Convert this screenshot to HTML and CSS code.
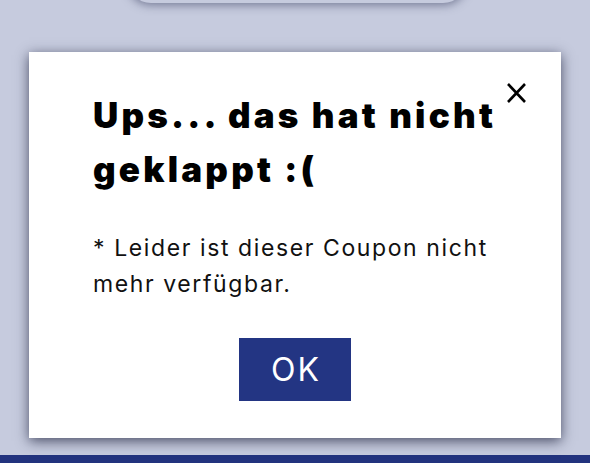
FILE: index.html
```html
<!DOCTYPE html>
<html>
  <head>
    <title>Coupon</title>
    <link rel="stylesheet" href="styles.css">
  </head>
  <body>
    <div class="topcard"></div>

    <section class="dialog">
      <button class="close" aria-label="Schließen">
        <svg width="21" height="20" viewBox="0 0 21 20">
          <path d="M2 1 L19 19 M19 1 L2 19" stroke="#000" stroke-width="2.6" fill="none"/>
        </svg>
      </button>
      <h1>Ups... das hat nicht geklappt :(</h1>
      <p class="message">* Leider ist dieser Coupon nicht mehr verfügbar.</p>
      <div class="actions">
        <button class="ok">OK</button>
      </div>
    </section>

    <div class="navbar"></div>
  </body>
</html>
```

FILE: styles.css
```css
html, body{
  height: 100%;
}
body{
  margin: 0;
  background: #c6cbde;
  font-family: Inter, "Noto Sans", sans-serif;
  display: flex;
  flex-direction: column;
  align-items: center;
  overflow: hidden;
}
.topcard{
  width: 340px;
  height: 30px;
  margin-top: -27px;
  margin-left: 4px;
  flex-shrink: 0;
  background: #c6cbde;
  border-radius: 0 0 24px 24px;
  box-shadow: 0 2px 10px rgba(50, 55, 90, 0.55);
}
.dialog{
  position: relative;
  box-sizing: border-box;
  width: 532px;
  height: 386px;
  margin-top: 49px;
  padding: 36px 50px 0 64px;
  background: #fff;
  box-shadow: 0 3px 12px rgba(30, 33, 60, 0.75);
  flex-shrink: 0;
}
.close{
  position: absolute;
  top: 31px;
  right: 34px;
  width: 21px;
  height: 20px;
  padding: 0;
  border: 0;
  background: none;
  cursor: pointer;
}
.close svg{
  display: block;
}
h1{
  margin: 0;
  font-size: 35px;
  line-height: 54px;
  font-weight: 900;
  letter-spacing: 3.2px;
  color: #000;
}
.message{
  margin: 34px 0 0;
  font-size: 23px;
  line-height: 36px;
  letter-spacing: 1.6px;
  color: #111;
}
.actions{
  display: flex;
  justify-content: center;
  margin: 36px 0 0 -14px;
}
.ok{
  width: 112px;
  height: 63px;
  border: 0;
  background: #233583;
  color: #fff;
  font-family: inherit;
  font-size: 32px;
  font-weight: 400;
  letter-spacing: 2px;
  padding: 0 0 0 2px;
  cursor: pointer;
}
.navbar{
  margin-top: auto;
  width: 100%;
  height: 8px;
  flex-shrink: 0;
  background: #22337e;
}
```
